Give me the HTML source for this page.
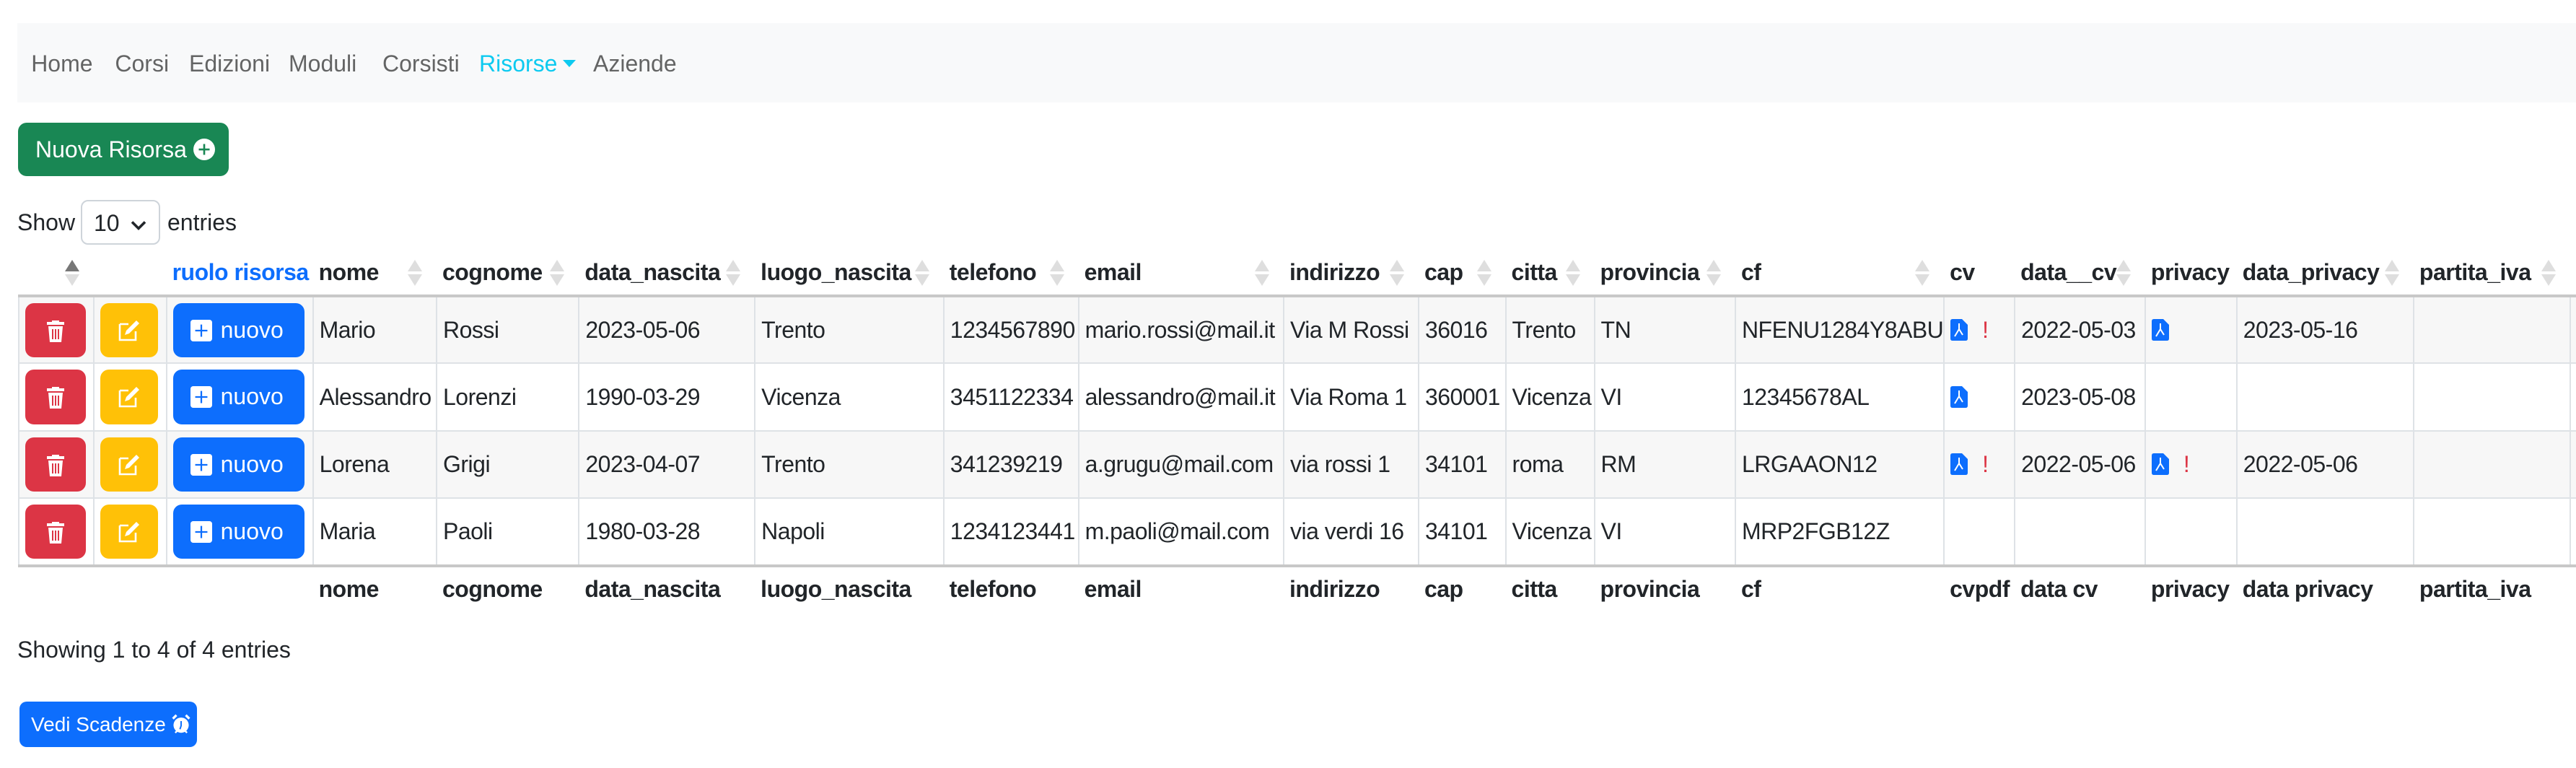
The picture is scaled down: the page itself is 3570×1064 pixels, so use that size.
<!DOCTYPE html>
<html><head><meta charset="utf-8">
<style>
html,body{margin:0;padding:0;background:#fff;}
body{zoom:2;width:1785px;height:532px;overflow:hidden;font-family:"Liberation Sans",sans-serif;font-size:16px;color:#212529;position:relative;}
.nav{position:absolute;left:12px;top:16px;right:0;height:55px;background:#f8f9fa;}
.nav span{position:absolute;top:16px;line-height:24px;color:rgba(0,0,0,.6);white-space:nowrap;}
.nav .act{color:#0dcaf0;}
.caret{display:inline-block;width:0;height:0;border-left:4.5px solid transparent;border-right:4.5px solid transparent;border-top:5px solid #0dcaf0;vertical-align:3px;margin-left:4px;}
.btn{position:absolute;color:#fff;border-radius:6px;white-space:nowrap;box-sizing:border-box;}
.green{left:12.5px;top:85px;width:146px;height:37px;background:#198754;line-height:37px;padding-left:12px;}
.show{position:absolute;left:12px;top:142px;line-height:24px;}
.sel{position:absolute;left:56px;top:138.5px;width:55px;height:31px;border:1px solid #ced4da;border-radius:5px;box-sizing:border-box;background:#fff;}
.sel b{position:absolute;left:8px;top:3px;font-weight:normal;line-height:24px;}
.sel i{position:absolute;right:8px;top:8px;}
.tbl{position:absolute;left:12.5px;top:173px;border-collapse:collapse;table-layout:fixed;width:1900px;}
.tbl th,.tbl td{padding:0 4px;white-space:nowrap;text-align:left;box-sizing:border-box;letter-spacing:-0.25px;}
.tbl thead th{height:32px;font-weight:bold;position:relative;border-bottom:2px solid #c8c8c8;}
.tbl tbody td{height:46.7px;border-left:1px solid #dee2e6;border-right:1px solid #dee2e6;border-bottom:1px solid #dee2e6;}
.tbl tbody tr:nth-child(odd) td{background:#f7f7f7;}
.tbl tbody tr:last-child td{border-bottom:2px solid #c8c8c8;}
.tbl tfoot th{height:32px;font-weight:bold;}
.ar{position:absolute;right:10px;top:7px;width:10px;height:18px;}
.ar:before,.ar:after{content:"";position:absolute;left:0;border-left:5px solid transparent;border-right:5px solid transparent;}
.ar:before{top:0;border-bottom:8px solid #dedede;}
.ar:after{top:10px;border-top:8px solid #dedede;}
.ar.up:before{border-bottom-color:#777;}
.b{display:inline-block;height:37.6px;border-radius:6px;vertical-align:middle;position:relative;color:#fff;line-height:37.6px;letter-spacing:0;}
.red{width:42px;background:#dc3545;}
.yel{width:40px;background:#ffc107;}
.blu{width:91px;background:#0d6efd;padding-left:33px;box-sizing:border-box;font-size:16px;}
.b svg{position:absolute;}
.ex{color:#dc3545;margin-left:10px;}
.foot{position:absolute;left:12px;top:438px;line-height:24px;}
.vedi{left:13.5px;top:486px;width:123px;height:31.5px;background:#0d6efd;font-size:14px;line-height:31.5px;padding-left:8px;border-radius:5px;}
</style></head><body>
<div class="nav">
<span style="left:9.6px">Home</span>
<span style="left:67.7px">Corsi</span>
<span style="left:119px">Edizioni</span>
<span style="left:188px">Moduli</span>
<span style="left:253px">Corsisti</span>
<span class="act" style="left:320px">Risorse<i class="caret"></i></span>
<span style="left:399px">Aziende</span>
</div>
<div class="btn green">Nuova Risorsa <svg width="15" height="15" viewBox="0 0 16 16" style="vertical-align:-2px"><circle cx="8" cy="8" r="8" fill="#fff"/><path d="M8 4v8M4 8h8" stroke="#198754" stroke-width="1.4"/></svg></div>
<div class="show">Show</div>
<div class="sel"><b>10</b><i><svg width="12" height="12" viewBox="0 0 16 16"><path d="M2 5l6 6 6-6" fill="none" stroke="#212529" stroke-width="2.4"/></svg></i></div>
<div class="show" style="left:116px">entries</div>

<table class="tbl">
<colgroup>
<col style="width:51.8px"><col style="width:50.5px"><col style="width:101.5px"><col style="width:85.7px"><col style="width:98.7px"><col style="width:121.9px"><col style="width:130.8px"><col style="width:93.4px"><col style="width:142.2px"><col style="width:93.5px"><col style="width:60.3px"><col style="width:61.5px"><col style="width:97.7px"><col style="width:144.6px"><col style="width:49px"><col style="width:90.4px"><col style="width:63.4px"><col style="width:122.6px"><col style="width:108.5px"><col style="width:132px">
</colgroup>
<thead><tr>
<th><span class="ar up"></span></th><th></th><th style="color:#0d6efd">ruolo risorsa</th>
<th>nome<span class="ar"></span></th><th>cognome<span class="ar"></span></th><th>data_nascita<span class="ar"></span></th><th>luogo_nascita<span class="ar"></span></th><th>telefono<span class="ar"></span></th><th>email<span class="ar"></span></th><th>indirizzo<span class="ar"></span></th><th>cap<span class="ar"></span></th><th>citta<span class="ar"></span></th><th>provincia<span class="ar"></span></th><th>cf<span class="ar"></span></th><th>cv</th><th>data__cv<span class="ar"></span></th><th>privacy</th><th>data_privacy<span class="ar"></span></th><th>partita_iva<span class="ar"></span></th><th></th>
</tr></thead>
<tbody>
<tr><td><span class="b red"><svg style="left:14px;top:11px" width="14" height="16" viewBox="0 0 14 16"><path d="M4.5 2V1h5v1H13v2H1V2z M2 5h10l-1 11H3z" fill="#fff"/><path d="M5 7v7M7 7v7M9 7v7" stroke="#dc3545" stroke-width="1"/></svg></span></td><td><span class="b yel"><svg style="left:12px;top:11px" width="16" height="16" viewBox="0 0 16 16"><path d="M1.5 3.5h6M1.5 3.5v11h11v-6" fill="none" stroke="#fff" stroke-width="1.3"/><path d="M13 1l2 2-7 7-3 1 1-3z" fill="#fff"/></svg></span></td><td><span class="b blu"><svg style="left:12px;top:11.5px" width="15" height="15" viewBox="0 0 16 16"><rect width="16" height="16" rx="2" fill="#fff"/><path d="M8 3.5v9M3.5 8h9" stroke="#0d6efd" stroke-width="1.2"/></svg>nuovo</span></td>
<td>Mario</td><td>Rossi</td><td>2023-05-06</td><td>Trento</td><td>1234567890</td><td>mario.rossi@mail.it</td><td>Via M Rossi</td><td>36016</td><td>Trento</td><td>TN</td><td>NFENU1284Y8ABU</td>
<td><svg width="12" height="15" viewBox="0 0 12 15" style="vertical-align:-2px"><path d="M0 1.5Q0 0 1.5 0H8l4 4v9.5Q12 15 10.5 15h-9Q0 15 0 13.5z" fill="#0d6efd"/><path d="M6 3v4l-3 5M6 7l2.5 4" fill="none" stroke="#fff" stroke-width="1"/></svg><span class="ex">!</span></td><td>2022-05-03</td>
<td><svg width="12" height="15" viewBox="0 0 12 15" style="vertical-align:-2px"><path d="M0 1.5Q0 0 1.5 0H8l4 4v9.5Q12 15 10.5 15h-9Q0 15 0 13.5z" fill="#0d6efd"/><path d="M6 3v4l-3 5M6 7l2.5 4" fill="none" stroke="#fff" stroke-width="1"/></svg></td><td>2023-05-16</td><td></td><td></td></tr>

<tr><td><span class="b red"><svg style="left:14px;top:11px" width="14" height="16" viewBox="0 0 14 16"><path d="M4.5 2V1h5v1H13v2H1V2z M2 5h10l-1 11H3z" fill="#fff"/><path d="M5 7v7M7 7v7M9 7v7" stroke="#dc3545" stroke-width="1"/></svg></span></td><td><span class="b yel"><svg style="left:12px;top:11px" width="16" height="16" viewBox="0 0 16 16"><path d="M1.5 3.5h6M1.5 3.5v11h11v-6" fill="none" stroke="#fff" stroke-width="1.3"/><path d="M13 1l2 2-7 7-3 1 1-3z" fill="#fff"/></svg></span></td><td><span class="b blu"><svg style="left:12px;top:11.5px" width="15" height="15" viewBox="0 0 16 16"><rect width="16" height="16" rx="2" fill="#fff"/><path d="M8 3.5v9M3.5 8h9" stroke="#0d6efd" stroke-width="1.2"/></svg>nuovo</span></td>
<td>Alessandro</td><td>Lorenzi</td><td>1990-03-29</td><td>Vicenza</td><td>3451122334</td><td>alessandro@mail.it</td><td>Via Roma 1</td><td>360001</td><td>Vicenza</td><td>VI</td><td>12345678AL</td>
<td><svg width="12" height="15" viewBox="0 0 12 15" style="vertical-align:-2px"><path d="M0 1.5Q0 0 1.5 0H8l4 4v9.5Q12 15 10.5 15h-9Q0 15 0 13.5z" fill="#0d6efd"/><path d="M6 3v4l-3 5M6 7l2.5 4" fill="none" stroke="#fff" stroke-width="1"/></svg></td><td>2023-05-08</td><td></td><td></td><td></td><td></td></tr>

<tr><td><span class="b red"><svg style="left:14px;top:11px" width="14" height="16" viewBox="0 0 14 16"><path d="M4.5 2V1h5v1H13v2H1V2z M2 5h10l-1 11H3z" fill="#fff"/><path d="M5 7v7M7 7v7M9 7v7" stroke="#dc3545" stroke-width="1"/></svg></span></td><td><span class="b yel"><svg style="left:12px;top:11px" width="16" height="16" viewBox="0 0 16 16"><path d="M1.5 3.5h6M1.5 3.5v11h11v-6" fill="none" stroke="#fff" stroke-width="1.3"/><path d="M13 1l2 2-7 7-3 1 1-3z" fill="#fff"/></svg></span></td><td><span class="b blu"><svg style="left:12px;top:11.5px" width="15" height="15" viewBox="0 0 16 16"><rect width="16" height="16" rx="2" fill="#fff"/><path d="M8 3.5v9M3.5 8h9" stroke="#0d6efd" stroke-width="1.2"/></svg>nuovo</span></td>
<td>Lorena</td><td>Grigi</td><td>2023-04-07</td><td>Trento</td><td>341239219</td><td>a.grugu@mail.com</td><td>via rossi 1</td><td>34101</td><td>roma</td><td>RM</td><td>LRGAAON12</td>
<td><svg width="12" height="15" viewBox="0 0 12 15" style="vertical-align:-2px"><path d="M0 1.5Q0 0 1.5 0H8l4 4v9.5Q12 15 10.5 15h-9Q0 15 0 13.5z" fill="#0d6efd"/><path d="M6 3v4l-3 5M6 7l2.5 4" fill="none" stroke="#fff" stroke-width="1"/></svg><span class="ex">!</span></td><td>2022-05-06</td>
<td><svg width="12" height="15" viewBox="0 0 12 15" style="vertical-align:-2px"><path d="M0 1.5Q0 0 1.5 0H8l4 4v9.5Q12 15 10.5 15h-9Q0 15 0 13.5z" fill="#0d6efd"/><path d="M6 3v4l-3 5M6 7l2.5 4" fill="none" stroke="#fff" stroke-width="1"/></svg><span class="ex">!</span></td><td>2022-05-06</td><td></td><td></td></tr>

<tr><td><span class="b red"><svg style="left:14px;top:11px" width="14" height="16" viewBox="0 0 14 16"><path d="M4.5 2V1h5v1H13v2H1V2z M2 5h10l-1 11H3z" fill="#fff"/><path d="M5 7v7M7 7v7M9 7v7" stroke="#dc3545" stroke-width="1"/></svg></span></td><td><span class="b yel"><svg style="left:12px;top:11px" width="16" height="16" viewBox="0 0 16 16"><path d="M1.5 3.5h6M1.5 3.5v11h11v-6" fill="none" stroke="#fff" stroke-width="1.3"/><path d="M13 1l2 2-7 7-3 1 1-3z" fill="#fff"/></svg></span></td><td><span class="b blu"><svg style="left:12px;top:11.5px" width="15" height="15" viewBox="0 0 16 16"><rect width="16" height="16" rx="2" fill="#fff"/><path d="M8 3.5v9M3.5 8h9" stroke="#0d6efd" stroke-width="1.2"/></svg>nuovo</span></td>
<td>Maria</td><td>Paoli</td><td>1980-03-28</td><td>Napoli</td><td>1234123441</td><td>m.paoli@mail.com</td><td>via verdi 16</td><td>34101</td><td>Vicenza</td><td>VI</td><td>MRP2FGB12Z</td><td></td><td></td><td></td><td></td><td></td><td></td></tr>
</tbody>
<tfoot><tr><th></th><th></th><th></th><th>nome</th><th>cognome</th><th>data_nascita</th><th>luogo_nascita</th><th>telefono</th><th>email</th><th>indirizzo</th><th>cap</th><th>citta</th><th>provincia</th><th>cf</th><th>cvpdf</th><th>data cv</th><th>privacy</th><th>data privacy</th><th>partita_iva</th><th></th></tr></tfoot>
</table>

<div class="foot">Showing 1 to 4 of 4 entries</div>
<div class="btn vedi">Vedi Scadenze <svg width="13" height="14" viewBox="0 0 16 17" style="vertical-align:-2px"><circle cx="8" cy="9.5" r="6.5" fill="#fff"/><path d="M1 4l3-3M15 4l-3-3" stroke="#fff" stroke-width="2"/><path d="M8 6v4l-1 3" stroke="#0d6efd" stroke-width="1.2" fill="none"/><path d="M3 16l2-2M13 16l-2-2" stroke="#fff" stroke-width="1.5"/></svg></div>
</body></html>
